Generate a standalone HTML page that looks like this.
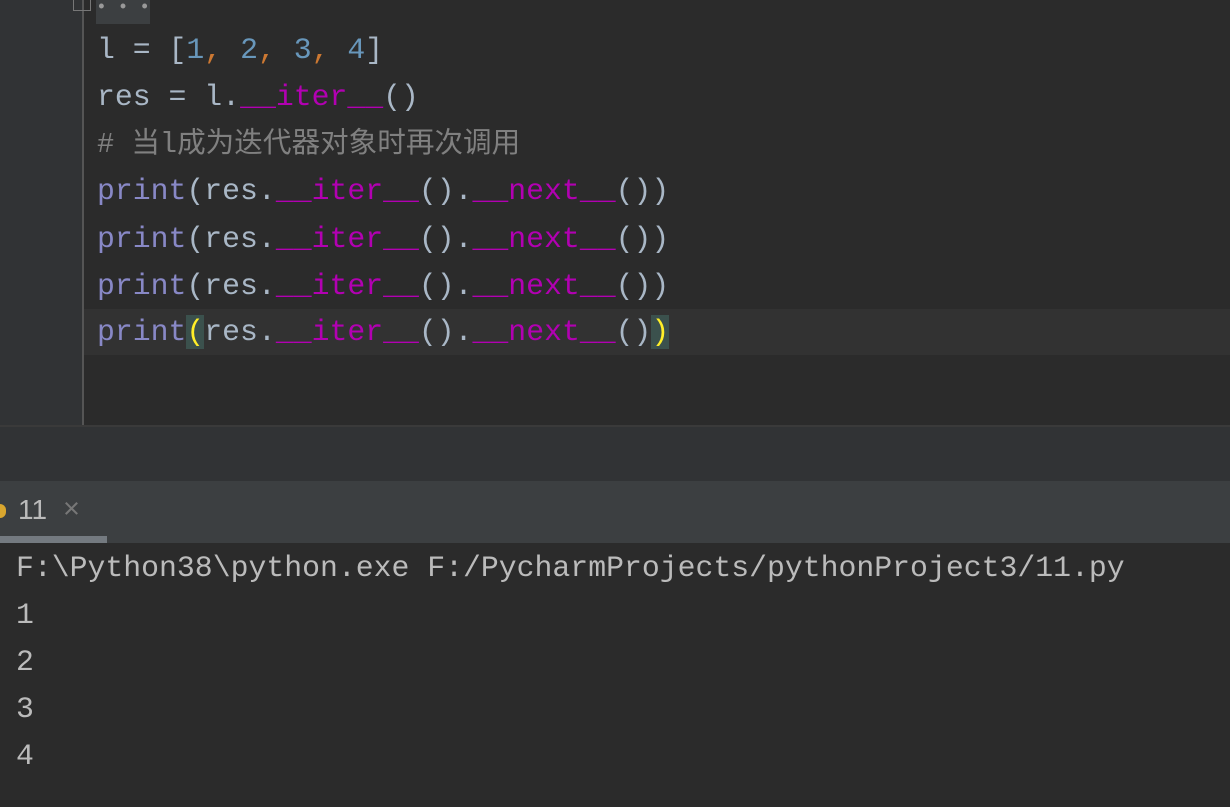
<!DOCTYPE html>
<html><head><meta charset="utf-8"><style>
body{margin:0;width:1230px;height:807px;background:#2b2b2b;overflow:hidden;position:relative;font-family:"Liberation Mono","Noto Sans CJK SC",monospace;font-size:29.8px;color:#a9b7c6}
.ed{position:absolute;left:0;top:0;width:1230px;height:425px;background:#2b2b2b}
.gut{position:absolute;left:0;top:0;width:82px;height:425px;background:#313335;border-right:2px solid #555}
.cur{position:absolute;left:84px;top:309px;width:1146px;height:46px;background:#323232}
.ln{position:absolute;left:97px;height:47px;line-height:47px;white-space:pre}
.n{color:#6897bb}.c{color:#cc7832}.m{color:#b200b2}.p{color:#8888c6}.cm{color:#808080;font-size:28.6px}
.band{position:absolute;left:0;top:425px;width:1230px;height:56px;background:#313335;border-top:2px solid #3a3a3a}
.tab{position:absolute;left:0;top:481px;width:1230px;height:62px;background:#3c3f41}
.con{position:absolute;left:16px;height:47px;line-height:47px;white-space:pre;color:#bbbbbb}
.hl{background:#3b514d;color:#ffef28}
</style></head><body>
<div class="ed"></div>
<div class="gut"></div>
<div style="position:absolute;left:96px;top:0;width:54px;height:24px;background:#3c3f41;color:#999;font-size:18px;line-height:16px;text-align:center">• • •</div>
<div style="position:absolute;left:73px;top:0;width:16px;height:10px;border:1px solid #777;border-top:none"></div>
<div class="cur"></div>
<div class="ln" style="top:27px">l = [<span class="n">1</span><span class="c">, </span><span class="n">2</span><span class="c">, </span><span class="n">3</span><span class="c">, </span><span class="n">4</span>]</div>
<div class="ln" style="top:74px">res = l.<span class="m">__iter__</span>()</div>
<div class="ln cm" style="top:121px"># 当l成为迭代器对象时再次调用</div>
<div class="ln" style="top:168px"><span class="p">print</span>(res.<span class="m">__iter__</span>().<span class="m">__next__</span>())</div>
<div class="ln" style="top:216px"><span class="p">print</span>(res.<span class="m">__iter__</span>().<span class="m">__next__</span>())</div>
<div class="ln" style="top:263px"><span class="p">print</span>(res.<span class="m">__iter__</span>().<span class="m">__next__</span>())</div>
<div class="ln" style="top:309px;line-height:46px"><span class="p">print</span><span class="hl">(</span>res.<span class="m">__iter__</span>().<span class="m">__next__</span>()<span class="hl">)</span></div>
<div class="band"></div>
<div class="tab">
<div style="position:absolute;left:-6px;top:23px;width:12px;height:14px;border-radius:6px;background:#d9a62e"></div>
<div style="position:absolute;left:18px;top:13px;font-family:'Liberation Sans',sans-serif;font-size:28px;color:#bbb">11</div>
<div style="position:absolute;left:63px;top:12px;font-family:'Liberation Sans',sans-serif;font-size:29px;color:#777">×</div>
<div style="position:absolute;left:0;top:55px;width:107px;height:7px;background:#747a80"></div>
</div>
<div class="con" style="top:545px">F:\Python38\python.exe F:/PycharmProjects/pythonProject3/11.py</div>
<div class="con" style="top:592px">1</div>
<div class="con" style="top:639px">2</div>
<div class="con" style="top:686px">3</div>
<div class="con" style="top:733px">4</div>
</body></html>
